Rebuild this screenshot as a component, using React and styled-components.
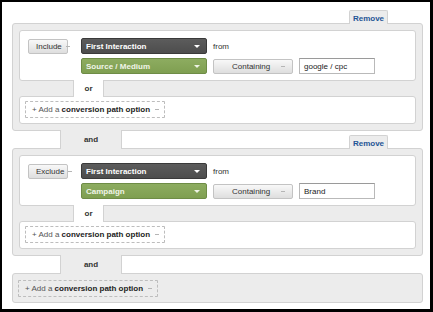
import React from 'react';
import styled, { createGlobalStyle } from 'styled-components';

const PANEL_BG = '#ececec';
const LINE = '#d2d2d2';

const GlobalStyle = createGlobalStyle`
  html, body {
    margin: 0;
    padding: 0;
    background: #fff;
  }
  body {
    font-family: "Liberation Sans", Arial, sans-serif;
    font-size: 8px;
    color: #333;
  }
`;

const Frame = styled.div`
  width: 433px;
  height: 312px;
  box-sizing: border-box;
  border-style: solid;
  border-color: #000;
  border-width: 2px 3px 3px 2px;
  padding: 8px 7px 0 10px;
  display: flex;
  flex-direction: column;
`;

const TabRow = styled.div`
  display: flex;
  align-items: flex-end;
  justify-content: ${p => (p.$withAnd ? 'space-between' : 'flex-end')};
  height: ${p => (p.$withAnd ? '19px' : '14px')};
  margin: ${p => (p.$withAnd ? '-1px 0' : '0 0 -1px')};
  position: relative;
  z-index: 1;
`;

const AndTab = styled.div`
  width: 62px;
  height: 19px;
  box-sizing: border-box;
  margin-left: 48px;
  background: ${PANEL_BG};
  border-left: 1px solid ${LINE};
  border-right: 1px solid ${LINE};
  display: flex;
  align-items: center;
  justify-content: center;
  font-weight: bold;
  color: #333;
`;

const RemoveTab = styled.div`
  width: 39px;
  height: 14px;
  box-sizing: border-box;
  margin-right: 35px;
  background: ${PANEL_BG};
  border: 1px solid ${LINE};
  border-bottom: none;
  border-radius: 2px 2px 0 0;
  display: flex;
  align-items: center;
  justify-content: center;
  padding-top: 1px;
  font-weight: bold;
  color: #1f5596;
`;

const Panel = styled.div`
  box-sizing: border-box;
  background: ${PANEL_BG};
  border: 1px solid ${LINE};
  border-radius: 3px;
  padding: ${p => p.$pad || '6px'};
  display: flex;
  flex-direction: column;
`;

const Box = styled.div`
  background: #fff;
  border: 1px solid ${LINE};
  border-radius: 3px;
  padding: ${p => p.$pad};
  display: flex;
`;

const OrTab = styled.div`
  align-self: flex-start;
  width: 31px;
  height: 17px;
  box-sizing: border-box;
  margin: -1px 0 -1px 54px;
  position: relative;
  z-index: 1;
  background: #fff;
  border-left: 1px solid ${LINE};
  border-right: 1px solid ${LINE};
  display: flex;
  align-items: center;
  justify-content: center;
  font-weight: bold;
  color: #333;
`;

const Condition = styled.div`
  display: flex;
  gap: 13px;
`;

const Stack = styled.div`
  display: flex;
  flex-direction: column;
  gap: 4px;
`;

const Line = styled.div`
  display: flex;
  align-items: center;
  gap: 6px;
  height: 16px;
`;

const Caret = styled.span`
  width: 0;
  height: 0;
  border-left: 3px solid transparent;
  border-right: 3px solid transparent;
  border-top: 3px solid ${p => p.$color || '#aaa'};
  flex: none;
`;

const SoftCaret = styled.span`
  width: 4px;
  height: 1px;
  background: #b5b5b5;
  flex: none;
`;

const GrayButton = styled.div`
  box-sizing: border-box;
  width: ${p => p.$w}px;
  height: 15px;
  margin-top: ${p => p.$top || 0}px;
  border: 1px solid #c3c3c3;
  border-radius: 2px;
  background: linear-gradient(#f8f8f8, #dedede);
  display: flex;
  align-items: center;
  gap: ${p => p.$gap || 4}px;
  padding-left: ${p => p.$left}px;
  color: #333;
`;

const Dropdown = styled.div`
  box-sizing: border-box;
  width: 126px;
  height: 16px;
  border-radius: 2px;
  border: 1px solid ${p => (p.$green ? '#6e8c46' : '#3a3a3a')};
  background: ${p =>
    p.$green
      ? 'linear-gradient(#8dac60, #7f9f51)'
      : 'linear-gradient(#5c5c5c, #4d4d4d)'};
  color: ${p => (p.$green ? '#f1f5e8' : '#fff')};
  font-weight: bold;
  display: flex;
  align-items: center;
  justify-content: space-between;
  padding: 0 6px 0 4px;
`;

const From = styled.span`
  color: #333;
`;

const TextInput = styled.div`
  box-sizing: border-box;
  width: 76px;
  height: 16px;
  border: 1px solid #b9b9b9;
  border-top-color: #9a9a9a;
  background: #fff;
  display: flex;
  align-items: center;
  padding-left: 4px;
  color: #222;
`;

const AddButton = styled.div`
  box-sizing: border-box;
  height: 17px;
  border: 1px dashed #bdbdbd;
  border-radius: 1px;
  display: inline-flex;
  align-items: center;
  gap: 5px;
  padding: 0 5px 0 6px;
  color: #555;
  background: ${p => (p.$onGray ? PANEL_BG : '#fff')};
  b {
    color: #222;
  }
`;

const AddOption = ({ onGray }) => (
  <AddButton $onGray={onGray}>
    <span>
      + Add a <b>conversion path option</b>
    </span>
    <SoftCaret />
  </AddButton>
);

const RuleGroup = ({ mode, dimension, value }) => (
  <Panel>
    <Box $pad="7px 8px 6px">
      <Condition>
        <GrayButton $w={40} $left={7} $top={1}>
          {mode}
          <SoftCaret />
        </GrayButton>
        <Stack>
          <Line>
            <Dropdown>
              First Interaction
              <Caret $color="#fff" />
            </Dropdown>
            <From>from</From>
          </Line>
          <Line>
            <Dropdown $green>
              {dimension}
              <Caret $color="#eef3e4" />
            </Dropdown>
            <GrayButton $w={80} $left={18} $gap={11}>
              Containing
              <SoftCaret />
            </GrayButton>
            <TextInput>{value}</TextInput>
          </Line>
        </Stack>
      </Condition>
    </Box>
    <OrTab>or</OrTab>
    <Box $pad="4px 5px 5px">
      <AddOption />
    </Box>
  </Panel>
);

export default function App() {
  return (
    <>
      <GlobalStyle />
      <Frame>
        <TabRow>
          <RemoveTab>Remove</RemoveTab>
        </TabRow>
        <RuleGroup mode="Include" dimension="Source / Medium" value="google / cpc" />
        <TabRow $withAnd>
          <AndTab>and</AndTab>
          <RemoveTab>Remove</RemoveTab>
        </TabRow>
        <RuleGroup mode="Exclude" dimension="Campaign" value="Brand" />
        <TabRow $withAnd>
          <AndTab>and</AndTab>
        </TabRow>
        <Panel $pad="6px 5px 5px">
          <div>
            <AddOption onGray />
          </div>
        </Panel>
      </Frame>
    </>
  );
}
